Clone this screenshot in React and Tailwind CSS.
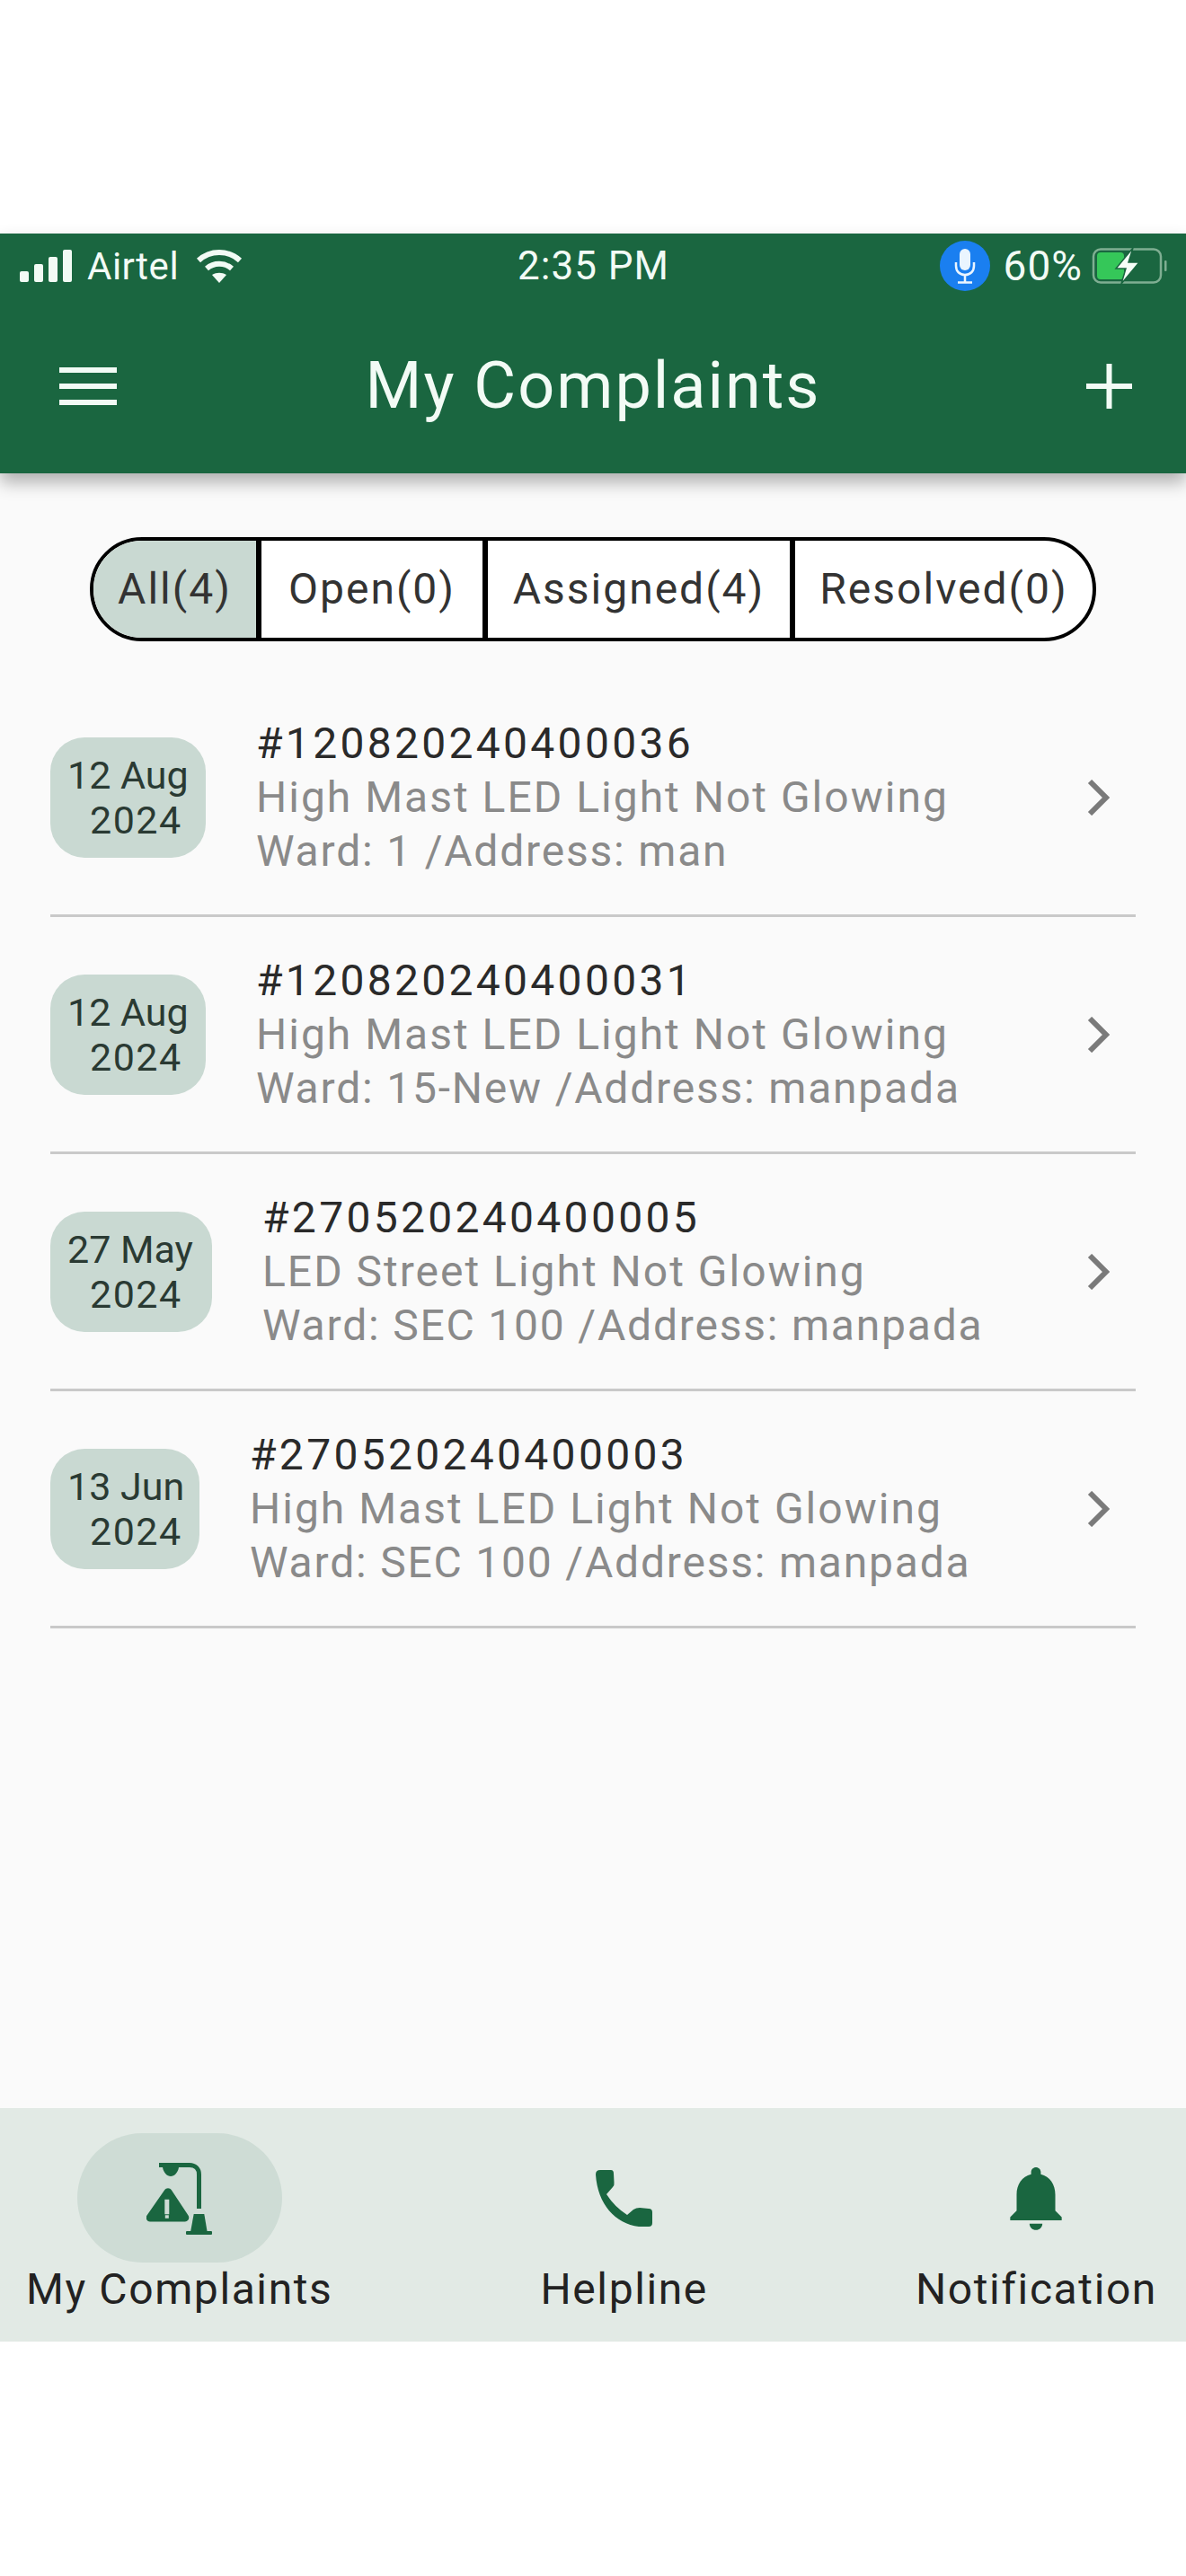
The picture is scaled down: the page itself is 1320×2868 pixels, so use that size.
import React from 'react';

const tabs = [
  { label: 'All(4)', width: 'w-[187px]', active: true },
  { label: 'Open(0)', width: 'w-[252px]' },
  { label: 'Assigned(4)', width: 'w-[342px]' },
  { label: 'Resolved(0)', width: 'flex-1' },
];

const complaints = [
  { date: '12 Aug', badge: 'w-[173px]', id: '#120820240400036', title: 'High Mast LED Light Not Glowing', ward: 'Ward: 1 /Address: man' },
  { date: '12 Aug', badge: 'w-[173px]', id: '#120820240400031', title: 'High Mast LED Light Not Glowing', ward: 'Ward: 15-New /Address: manpada' },
  { date: '27 May', badge: 'w-[180px]', id: '#270520240400005', title: 'LED Street Light Not Glowing', ward: 'Ward: SEC 100 /Address: manpada' },
  { date: '13 Jun', badge: 'w-[166px]', id: '#270520240400003', title: 'High Mast LED Light Not Glowing', ward: 'Ward: SEC 100 /Address: manpada' },
];

const LampIcon = () => (
  <svg width="74" height="81" viewBox="0 0 74 81" fill="#1a6640">
    <path d="M18 6h18c-1 6-5 10-9 10s-8-4-9-10z" />
    <path d="M14 3.500h34c6 0 10.500 4 10.500 10.500V52" fill="none" stroke="#1a6640" strokeWidth="5" />
    <path d="M52.700 58h11.600L67.700 78H49z" />
    <rect x="44" y="77" width="29" height="4" rx="1" />
    <path fillRule="evenodd" d="M20 31.500c2-3 6-3 8 0l18.500 28c2 3 0 7-3.500 7H4c-3.500 0-5.500-4-3.500-7zM20.300 41.700h5v16.600h-5zM20.800 59.300h4v3.400h-4z" />
  </svg>
);

const PhoneIcon = () => (
  <svg width="63" height="63" viewBox="0 0 63 63" fill="#1a6640">
    <path d="M0 5Q0 0 5 0H17Q20 0 20 4L20.500 14Q21 17 19 19L12 27Q21 41 35 50L42 44Q45 42 49 42L59 43Q63 43 63 47V59Q63 63 59 63H48C22 60 2 38 0 5Z" />
  </svg>
);

const BellIcon = () => (
  <svg width="86" height="86" viewBox="0 0 24 24" fill="#1a6640">
    <path d="M12 22c1.100 0 2-.9 2-2h-4c0 1.100.89 2 2 2zm6-6v-5c0-3.070-1.640-5.640-4.500-6.320V4c0-.83-.67-1.500-1.500-1.500s-1.500.67-1.500 1.500v.68C7.630 5.360 6 7.920 6 11v5l-2 2v1h16v-1l-2-2z" />
  </svg>
);

const Signal = () => (
  <svg width="58" height="36" viewBox="0 0 58 36" fill="#f2fbf5">
    <rect x="0" y="24" width="10" height="12" rx="2" />
    <rect x="16" y="16" width="10" height="20" rx="2" />
    <rect x="32" y="8" width="10" height="28" rx="2" />
    <rect x="48" y="0" width="10" height="36" rx="2" />
  </svg>
);

const Wifi = () => (
  <svg width="52" height="37" viewBox="0 0 52 37" fill="none" stroke="#f2fbf5" strokeWidth="6">
    <path d="M3 12C16 0 36 0 49 12" />
    <path d="M12 21c8-7 20-7 28 0" />
    <path d="M26 37l-8-9c5-3 11-3 16 0z" fill="#f2fbf5" stroke="none" />
  </svg>
);

const Battery = () => (
  <svg width="84" height="42" viewBox="0 0 84 42" fill="none">
    <rect x="2" y="2.500" width="75" height="37" rx="8" stroke="#7fae92" strokeWidth="2.500" />
    <rect x="6" y="6" width="30" height="30" rx="4" fill="#35c759" />
    <rect x="81" y="15" width="2.500" height="12" rx="1" fill="#7fae92" />
    <path d="M46 1L27 24h11l-5 17 20-24H41z" fill="#f6fff8" stroke="#1a6640" strokeWidth="1.500" />
  </svg>
);

const Mic = () => (
  <div className="flex h-14 w-14 items-center justify-center rounded-full bg-[#1a7ff0]">
    <svg width="26" height="40" viewBox="0 0 26 40" fill="none" stroke="#eaf5ff" strokeWidth="2.500">
      <rect x="7" y="1" width="12" height="24" rx="6" fill="#eaf5ff" stroke="none" />
      <path d="M3 16v4c0 6 4 10 10 10s10-4 10-10v-4M13 30v8M5 38.500h16" />
    </svg>
  </div>
);

const Chevron = () => (
  <svg width="28" height="40" viewBox="0 0 28 40" fill="none" stroke="#7a7a7a" strokeWidth="6">
    <path d="M3 2l18 18L3 38" />
  </svg>
);

const Row = ({ date, badge, id, title, ward }) => (
  <div className="flex h-[264px] items-center border-b-[3px] border-[#c9c9c9]">
    <div className={`rounded-[38px] bg-[#c9d9d2] pl-[19px] py-[17px] text-[43px] leading-[50px] text-[#2a3a33] ${badge}`}>
      <div>{date}</div>
      <div className="pl-[25px] tracking-[1.500px]">2024</div>
    </div>
    <div className="ml-[56px] flex-1">
      <div className="text-[48px] leading-[60px] tracking-[3.300px] text-[#2a2a2a]">{id}</div>
      <div className="text-[48px] leading-[60px] tracking-[2px] text-[#8a8a8a]">{title}</div>
      <div className="text-[48px] leading-[60px] tracking-[1.800px] text-[#8a8a8a]">{ward}</div>
    </div>
    <div className="mr-[26px]">
      <Chevron />
    </div>
  </div>
);

export default function App() {
  return (
    <div className="flex h-[2868px] w-[1320px] flex-col bg-white font-['Roboto',sans-serif]">
      <div className="h-[260px]" />

      {/* app bar */}
      <header className="relative z-10 h-[267px] bg-[#1a6640] text-[#f2fbf5] shadow-[0_10px_18px_rgba(0,0,0,0.3)]">
        <div className="grid h-[72px] grid-cols-3 items-center pl-[22px] pr-[21px]">
          <div className="flex items-center">
            <Signal />
            <span className="ml-[17px] text-[42px] tracking-[0.5px]">Airtel</span>
            <span className="ml-[19px]"><Wifi /></span>
          </div>
          <div className="text-center text-[44px] tracking-[1px]">2:35 PM</div>
          <div className="flex items-center justify-end">
            <Mic />
            <span className="ml-[15px] text-[46px] tracking-[1px]">60%</span>
            <span className="ml-[10px]"><Battery /></span>
          </div>
        </div>
        <div className="flex h-[195px] items-center pl-[66px] pr-[60px]">
          <div className="flex h-[42px] w-[64px] flex-col justify-between">
            <div className="h-[6px] bg-[#f2fbf5]" />
            <div className="h-[6px] bg-[#f2fbf5]" />
            <div className="h-[6px] bg-[#f2fbf5]" />
          </div>
          <h1 className="flex-1 text-center text-[72px] font-normal tracking-[2px]">My Complaints</h1>
          <div className="flex w-[70px] justify-end">
            <svg width="51" height="50" viewBox="0 0 51 50" fill="#f2fbf5">
              <rect x="0" y="22" width="51" height="6" />
              <rect x="22.500" y="0" width="6" height="50" />
            </svg>
          </div>
        </div>
      </header>

      <main className="flex-1 bg-[#fafafa] px-[56px]">
        <div className="mx-[44px] mt-[71px] flex h-[116px] overflow-hidden rounded-full border-[4px] border-black bg-white">
          {tabs.map((tab, i) => (
            <div
              key={tab.label}
              className={`flex items-center justify-center text-[48px] tracking-[2px] text-[#333] ${tab.width} ${tab.active ? 'bg-[#c9d9d2]' : ''} ${i < 3 ? 'border-r-[6px] border-black' : ''}`}
            >
              {tab.label}
            </div>
          ))}
        </div>
        <div className="mt-[43px]">
          {complaints.map((c) => (
            <Row key={c.id} {...c} />
          ))}
        </div>
      </main>

      {/* bottom nav */}
      <nav className="flex h-[260px] items-start justify-between bg-[#e2eae5] pl-[29px] pr-[32px] pt-[28px]">
        <NavItem label="My Complaints" active><LampIcon /></NavItem>
        <NavItem label="Helpline"><PhoneIcon /></NavItem>
        <NavItem label="Notification"><BellIcon /></NavItem>
      </nav>
      <div className="h-[261px]" />
    </div>
  );
}

function NavItem({ label, active, children }) {
  return (
    <div className="flex flex-col items-center">
      <div className={`flex h-[144px] w-[228px] items-center justify-center rounded-[72px] ${active ? 'bg-[#cedcd5]' : ''}`}>
        {children}
      </div>
      <span className="mt-[2px] text-[48px] leading-[56px] tracking-[1.600px] text-[#222]">{label}</span>
    </div>
  );
}
